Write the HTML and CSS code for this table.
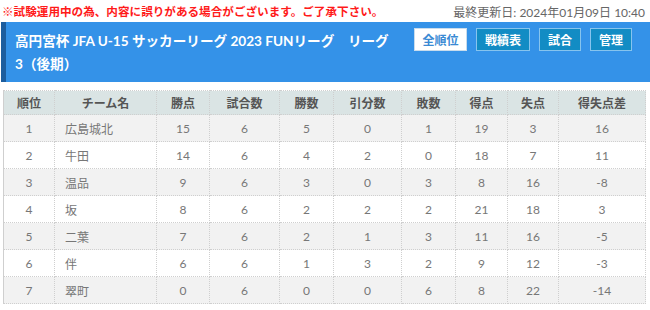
FILE: index.html
```html
<!DOCTYPE html>
<html lang="ja">
<head>
<meta charset="utf-8">
<title>順位表</title>
<link rel="stylesheet" href="styles.css">
</head>
<body>
<div class="topbar">
  <p class="notice">※試験運用中の為、内容に誤りがある場合がございます。ご了承下さい。</p>
  <p class="updated">最終更新日: 2024年01月09日 10:40</p>
</div>
<div class="league-head">
  <h1 class="league-title">高円宮杯 JFA U-15 サッカーリーグ 2023 FUNリーグ　<span class="nw">リーグ</span> <span class="nw">3（後期）</span></h1>
  <nav class="nav">
    <a class="btn btn-active">全順位</a>
    <a class="btn">戦績表</a>
    <a class="btn">試合</a>
    <a class="btn">管理</a>
  </nav>
</div>
<table class="standings">
  <colgroup>
    <col class="c-rank"><col class="c-team"><col class="c-pts"><col class="c-gp"><col class="c-w"><col class="c-d"><col class="c-l"><col class="c-gf"><col class="c-ga"><col class="c-gd">
  </colgroup>
  <thead>
    <tr><th>順位</th><th>チーム名</th><th>勝点</th><th>試合数</th><th>勝数</th><th>引分数</th><th>敗数</th><th>得点</th><th>失点</th><th>得失点差</th></tr>
  </thead>
  <tbody>
    <tr><td>1</td><td class="team">広島城北</td><td>15</td><td>6</td><td>5</td><td>0</td><td>1</td><td>19</td><td>3</td><td>16</td></tr>
    <tr><td>2</td><td class="team">牛田</td><td>14</td><td>6</td><td>4</td><td>2</td><td>0</td><td>18</td><td>7</td><td>11</td></tr>
    <tr><td>3</td><td class="team">温品</td><td>9</td><td>6</td><td>3</td><td>0</td><td>3</td><td>8</td><td>16</td><td>-8</td></tr>
    <tr><td>4</td><td class="team">坂</td><td>8</td><td>6</td><td>2</td><td>2</td><td>2</td><td>21</td><td>18</td><td>3</td></tr>
    <tr><td>5</td><td class="team">二葉</td><td>7</td><td>6</td><td>2</td><td>1</td><td>3</td><td>11</td><td>16</td><td>-5</td></tr>
    <tr><td>6</td><td class="team">伴</td><td>6</td><td>6</td><td>1</td><td>3</td><td>2</td><td>9</td><td>12</td><td>-3</td></tr>
    <tr><td>7</td><td class="team">翠町</td><td>0</td><td>6</td><td>0</td><td>0</td><td>6</td><td>8</td><td>22</td><td>-14</td></tr>
  </tbody>
</table>
</body>
</html>
```
FILE: styles.css
```css
* { box-sizing: border-box; }
body {
  margin: 0;
  width: 650px;
  font-family: Lato, "Noto Sans CJK JP", sans-serif;
  background: #fff;
  overflow: hidden;
}
.topbar {
  display: flex;
  justify-content: space-between;
  align-items: center;
  height: 22px;
  padding: 0 5px 0 2px;
}
.notice {
  margin: 0;
  color: #ff1a1a;
  font-weight: bold;
  font-size: 11.6px;
  font-family: "Noto Sans CJK JP", sans-serif;
}
.updated {
  margin: 0;
  color: #666;
  font-size: 12px;
}
.league-head {
  display: flex;
  align-items: flex-start;
  margin-left: 1px;
  height: 60px;
  background: #3492e8;
  border-left: 5px solid #1c5d9e;
  padding: 6px 18px 0 9px;
}
.league-title {
  flex: 1;
  margin: 1.5px 0 0;
  padding-right: 20px;
  color: #fff;
  font-size: 13.6px;
  line-height: 23px;
  font-weight: bold;
  font-family: Lato, "Noto Sans CJK JP", sans-serif;
}
.nw { white-space: nowrap; }
.nav {
  display: flex;
  gap: 9px;
}
.btn {
  display: block;
  height: 23px;
  line-height: 21px;
  padding: 0 8px;
  font-size: 12px;
  font-weight: bold;
  font-family: "Noto Sans CJK JP", sans-serif;
  color: #fff;
  background: #128cc4;
  border: 1px solid #86c4ee;
}
.btn-active {
  background: #fff;
  color: #3a8ad4;
  border-color: #c9dcec;
  padding: 0 7.5px;
}
.standings {
  margin: 8px 0 0 3px;
  width: 642px;
  table-layout: fixed;
  border-collapse: collapse;
  border-left: 1px solid #cfcfcf;
  font-size: 12px;
  color: #777;
}
.c-rank { width: 51px; }
.c-team { width: 102px; }
.c-pts { width: 53px; }
.c-gp { width: 70px; }
.c-w { width: 54px; }
.c-d { width: 68px; }
.c-l { width: 54px; }
.c-gf { width: 52px; }
.c-ga { width: 51px; }
.c-gd { width: 87px; }
.standings th,
.standings td {
  border: 1px dotted #cfcfcf;
  text-align: center;
  padding: 0;
}
.standings th {
  height: 24px;
  background: #dae4e4;
  color: #555;
  font-weight: bold;
}
.standings td {
  height: 27px;
}
.standings tbody tr:nth-child(odd) td { background: #f2f2f2; }
.standings td.team {
  text-align: left;
  padding-left: 10px;
}
```
